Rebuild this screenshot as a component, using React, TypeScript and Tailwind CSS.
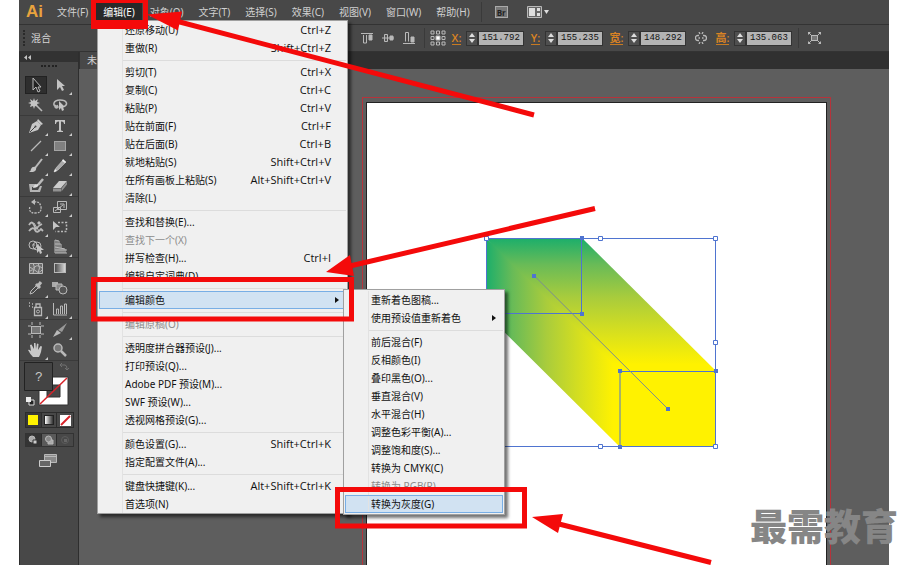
import { Fragment, type ReactNode } from 'react';

type MenuEntry = { label: string; keys?: string; disabled?: boolean; active?: boolean; submenu?: boolean };

const menuBar = ['文件(F)', '编辑(E)', '对象(O)', '文字(T)', '选择(S)', '效果(C)', '视图(V)', '窗口(W)', '帮助(H)'];

const editMenu: MenuEntry[][] = [
  [{ label: '还原移动(U)', keys: 'Ctrl+Z' }, { label: '重做(R)', keys: 'Shift+Ctrl+Z' }],
  [
    { label: '剪切(T)', keys: 'Ctrl+X' },
    { label: '复制(C)', keys: 'Ctrl+C' },
    { label: '粘贴(P)', keys: 'Ctrl+V' },
    { label: '贴在前面(F)', keys: 'Ctrl+F' },
    { label: '贴在后面(B)', keys: 'Ctrl+B' },
    { label: '就地粘贴(S)', keys: 'Shift+Ctrl+V' },
    { label: '在所有画板上粘贴(S)', keys: 'Alt+Shift+Ctrl+V' },
    { label: '清除(L)' },
  ],
  [
    { label: '查找和替换(E)...' },
    { label: '查找下一个(X)', disabled: true },
    { label: '拼写检查(H)...', keys: 'Ctrl+I' },
    { label: '编辑自定词典(D)...' },
  ],
  [{ label: '编辑颜色', active: true, submenu: true }],
  [{ label: '编辑原稿(O)', disabled: true }],
  [
    { label: '透明度拼合器预设(J)...' },
    { label: '打印预设(Q)...' },
    { label: 'Adobe PDF 预设(M)...' },
    { label: 'SWF 预设(W)...' },
    { label: '透视网格预设(G)...' },
  ],
  [{ label: '颜色设置(G)...', keys: 'Shift+Ctrl+K' }, { label: '指定配置文件(A)...' }],
  [{ label: '键盘快捷键(K)...', keys: 'Alt+Shift+Ctrl+K' }, { label: '首选项(N)' }],
];

const colorMenu: MenuEntry[][] = [
  [{ label: '重新着色图稿...' }, { label: '使用预设值重新着色', submenu: true }],
  [
    { label: '前后混合(F)' },
    { label: '反相颜色(I)' },
    { label: '叠印黑色(O)...' },
    { label: '垂直混合(V)' },
    { label: '水平混合(H)' },
    { label: '调整色彩平衡(A)...' },
    { label: '调整饱和度(S)...' },
    { label: '转换为 CMYK(C)' },
    { label: '转换为 RGB(R)', disabled: true },
    { label: '转换为灰度(G)', active: true },
  ],
];

function MenuList({ groups, className }: { groups: MenuEntry[][]; className: string }) {
  return (
    <div role="menu" className={`absolute border border-[#a0a0a0] bg-[#f0f0f0] px-px font-['Noto_Sans','Noto_Sans_CJK_SC',sans-serif] text-[10px] text-[#111] shadow-[3px_3px_3px_rgba(0,0,0,0.55)] ${className}`}>
      {groups.map((group, i) => (
        <Fragment key={i}>
          {i > 0 && (
            <div className="flex h-[6px] items-center">
              <span className="h-full w-6 border-r border-[#e2e2e2]" />
              <span className="h-px flex-1 bg-[#dcdcdc]" />
            </div>
          )}
          {group.map((item) => (
            <button
              key={item.label}
              role="menuitem"
              disabled={item.disabled}
              className={`flex h-[18px] w-full items-center whitespace-nowrap ${item.active ? 'bg-[#d1e2f2] outline -outline-offset-1 outline-[#78aee5]' : ''} ${item.disabled ? 'text-[#8c8c8c]' : ''}`}
            >
              <span className="mr-[2px] h-full w-6 shrink-0 border-r border-[#e2e2e2]" />
              {item.label}
              {item.keys && <span className="ml-auto pr-[15px] font-['Open_Sans',sans-serif] text-[11px]">{item.keys}</span>}
              {item.submenu && (
                <svg className="mr-[7px] ml-auto" width="4" height="6" viewBox="0 0 4 6"><path d="M0 0l4 3-4 3z" fill="#111" /></svg>
              )}
            </button>
          ))}
        </Fragment>
      ))}
    </div>
  );
}

function Icon({ children, w = 16, h = 16 }: { children: ReactNode; w?: number; h?: number }) {
  return <svg width={w} height={h} viewBox={`0 0 ${w} ${h}`} fill="none" stroke="#b9b9b9" className="shrink-0">{children}</svg>;
}

type Tool = { name: string; art: ReactNode; more?: boolean; active?: boolean };

const toolGroups: Tool[][] = [
  [
    { name: '选择', active: true, art: <path d="M5 1v12l3-3 2 5 2-1-2-4h3z" fill="#222" /> },
    { name: '直接选择', more: true, art: <path d="M5 2v11l3-3 2 4 2-1-2-4h3z" fill="#c4c4c4" stroke="none" /> },
    { name: '魔棒', art: <><path d="M6 1l1 3 3-2-1 3 3 1-3 1 1 3-3-1-1 3-1-3-3 1 1-3-3-1 3-1-1-3 3 2z" fill="#c4c4c4" stroke="none" /><path d="M9 9l5 5" strokeWidth="1.6" /></> },
    { name: '套索', art: <><path d="M5 10C0 9 1 3 8 3s9 5 3 7M4 8c-2 2 0 4 2 2l-1-2" strokeWidth="1.6" /><path d="M7 4v9l2-2 1 3 2-1-1-3h2z" fill="#c4c4c4" stroke="none" /></> },
  ],
  [
    { name: '钢笔', more: true, art: <><path d="M1 15l3-9 5-3 4 4-3 5z" fill="#c8c8c8" stroke="none" /><path d="M10 1l5 5-2 1-4-4z" fill="#c8c8c8" stroke="none" /><path d="M2 14l5-5" stroke="#444" /><circle cx="7.500" cy="8.500" r="1" fill="#444" stroke="none" /></> },
    { name: '文字', more: true, art: <path d="M3 2h10v4h-1q0-2.500-2.500-2.500H9V12q0 1 2 1v1H5v-1q2 0 2-1V3.500H6.500Q4 3.500 4 6H3z" fill="#c4c4c4" stroke="none" /> },
    { name: '直线段', more: true, art: <path d="M3 13L13 3" strokeWidth="1.300" /> },
    { name: '矩形', more: true, art: <rect x="2.500" y="3.500" width="11" height="9" fill="#808080" stroke="#a5a5a5" /> },
    { name: '画笔', more: true, art: <><path d="M14 1L7 10" strokeWidth="2" /><path d="M8 9q1 4-3 5H1q2-1 2-3 1-3 5-2z" fill="#c4c4c4" stroke="none" /></> },
    { name: '铅笔', more: true, art: <><path d="M2 14l2-4 7-8 3 2-8 8z" fill="#aaa" stroke="#ccc" strokeWidth=".6" /><path d="M2 14l1-3 2 2zM10 3l1-2 3 3-1 1z" fill="#eee" stroke="none" /></> },
    { name: '斑点画笔', art: <><path d="M1 6h7v3H4v3h6l2-4h2l-2 6H2z" fill="#b4b4b4" stroke="none" /><path d="M15 1l-5 6" strokeWidth="2.500" /><path d="M5 10q1-4 5-4 2 3-5 4z" fill="#ddd" stroke="none" /></> },
    { name: '橡皮擦', more: true, art: <><path d="M1 10l6-7h8l-6 7z" fill="#ccc" stroke="none" /><path d="M1 10.500v3h8v-3zM9.500 10.500l5.500-7v3l-5.500 7z" fill="#919191" stroke="none" /></> },
  ],
  [
    { name: '旋转', more: true, art: <><path d="M6 3q6-1 7 5t-6 6-5-7" strokeDasharray="2 1" strokeWidth="1.300" /><path d="M7 0L3 3l4 3z" fill="#bbb" stroke="none" /></> },
    { name: '比例缩放', more: true, art: <><path d="M5.500 2.500h9v8h-9zM1.500 8.500h7v5h-7z" /><path d="M3 12l8-6M8 5h4v4" /></> },
    { name: '宽度', more: true, art: <><path d="M1 6q3-5 5 0t3 3 5-4M1 12q4-5 6-1t6-1l2 2" strokeWidth="1.800" /><path d="M6 4l5 8" strokeWidth="1" /><circle cx="11" cy="4" r="1.200" fill="#ccc" /></> },
    { name: '自由变换', art: <><path d="M1 2v9l3-3h4z" fill="#c4c4c4" stroke="none" /><path d="M6 3.500h8.500v9h-11" strokeDasharray="2 1.500" strokeWidth="1.500" /></> },
    { name: '形状生成器', more: true, art: <><circle cx="5" cy="6" r="4" /><circle cx="9" cy="7" r="4" /><path d="M4 6h8" strokeDasharray="1 1" /><path d="M9 5v9l2-2 1 3 2-1-1-3h3z" fill="#c4c4c4" stroke="none" /></> },
    { name: '透视网格', more: true, art: <path d="M3 1v13h12M3 1l4 1v12M3 5h6v9M3 8l10 2v4M3 11h12M5 2v12M11 9v5" /> },
  ],
  [
    { name: '网格', art: <><path d="M1.500 3.500h13v10h-13z" fill="#6a6a6a" /><path d="M1 7q4 3 6 0t7 1M1 12q4-4 7-1t6-1M5 3q3 4 0 10M10 3q3 5 0 10" /></> },
    { name: '渐变', art: <><defs><linearGradient id="tool-fade"><stop stopColor="#444" /><stop offset="1" stopColor="#ddd" /></linearGradient></defs><rect x="2.500" y="3.500" width="11" height="9" fill="url(#tool-fade)" /></> },
    { name: '吸管', more: true, art: <><path d="M2 14l1-3 6-6 2 2-6 6z" /><path d="M8 4l4 4M10 6l3-4" strokeWidth="3" /></> },
    { name: '混合', art: <><path d="M0 2h6v5H0z" fill="#aaa" stroke="none" /><path d="M4 4h6v6H4z" fill="#888" /><circle cx="11" cy="10" r="4" fill="#555" /></> },
  ],
  [
    { name: '符号喷枪', more: true, art: <><path d="M6.500 6.500h7v8h-7zM8 6V3h4v3" strokeWidth="1.300" /><circle cx="10" cy="10.500" r="1.500" /><path d="M1 2h1M4 3h1M1 5h1M4 6h1" strokeWidth="1.300" /></> },
    { name: '柱形图', more: true, art: <path d="M1.500 2v12H15M4.500 13V8h2v5M8.500 13V5h2v8M12.500 13V3h2v10" /> },
  ],
  [
    { name: '画板', art: <><path d="M4 0v16M12 0v16M0 4h16M0 12h16" strokeDasharray="3 10" /><rect x="3.500" y="4.500" width="9" height="7" fill="#777" /></> },
    { name: '切片', more: true, art: <><path d="M1 15l4-7 4 3z" fill="#bbb" stroke="none" /><path d="M6 8l9-7-5 9z" fill="#999" stroke="none" /></> },
    { name: '抓手', more: true, art: <path d="M5 15Q2 12 0 8q1-1 3 1L2 3l1.500-.5L6 7V1h1.500L8 7l1-5.500 1.500.5L10 8l2.500-4 1.500.5L13 10q-1 3-2 5z" fill="#c8c8c8" stroke="none" /> },
    { name: '缩放', art: <><circle cx="6" cy="6" r="4" strokeWidth="1.500" fill="#777" /><path d="M9 9l5 5" strokeWidth="2.500" /></> },
  ],
];

function ToolBox() {
  return (
    <aside className="flex w-[60px] shrink-0 flex-col border-x border-[#2e2e2e] bg-[#484848]">
      <div className="flex h-[10px] items-center bg-[#323232] pl-1">
        <svg width="7" height="5" viewBox="0 0 7 5"><path d="M3 0v5L0 2.500zM7 0v5L4 2.500z" fill="#c4c4c4" /></svg>
      </div>
      <div className="flex h-[13px] justify-center pt-[3px]"><span className="h-[3px] w-4 border-t-2 border-dotted border-[#222]" /></div>
      {toolGroups.map((group, i) => (
        <div key={i} className={`grid grid-cols-2 pr-[6px] pl-1 ${i ? 'border-t border-[#3a3a3a]' : ''}`}>
          {group.map((tool) => (
            <button key={tool.name} aria-label={tool.name} className="relative flex h-5 items-center justify-center">
              <span className={tool.active ? 'border border-[#222] bg-[#2e2e2e] px-[2px]' : ''}><Icon>{tool.art}</Icon></span>
              {tool.more && <svg className="absolute right-0 bottom-0" width="3" height="3" viewBox="0 0 3 3"><path d="M3 0v3H0z" fill="#ccc" /></svg>}
            </button>
          ))}
        </div>
      ))}
      <div className="border-t border-[#3a3a3a] pl-1">
        <svg width="46" height="47" viewBox="0 0 46 47" aria-label="填色和描边">
          <path d="M15 16h29v28H15z" fill="#fff" stroke="#333" />
          <path d="M23 24h13v12H23z" fill="#484848" stroke="#333" />
          <path d="M16 43l27-26" stroke="#d8232a" strokeWidth="1.500" />
          <path d="M.5 1.500h28v28H.5z" fill="#444" stroke="#222" />
          <text x="11" y="20" fontSize="13" fill="#c8c8c8" fontFamily="Liberation Mono">?</text>
          <path d="M37 4h4q2 0 2 4M38 2l-2 2 2 2M41 7l2 2 2-2" fill="none" stroke="#707070" />
          <path d="M5 39h5v5H5z" fill="#222" stroke="#ddd" /><path d="M2 36h5v5H2z" fill="#eee" />
        </svg>
      </div>
      <div className="mt-[4px] ml-[5px] grid h-4 w-[49px] grid-cols-3 divide-x divide-[#2c2c2c] border border-[#2c2c2c]">
        <button aria-label="颜色" className="flex items-center justify-center bg-[#383838]"><span className="size-[10px] bg-[#fff200]" /></button>
        <button aria-label="渐变填充" className="flex items-center justify-center"><span className="size-[10px] border border-[#222] bg-linear-to-r from-white to-[#333]" /></button>
        <button aria-label="无" className="flex items-center justify-center"><svg width="11" height="11" viewBox="0 0 11 11"><path d="M0 0h11v11H0z" fill="#fff" /><path d="M1 10l9-9" stroke="#d8232a" strokeWidth="2" /></svg></button>
      </div>
      <div className="mt-[5px] ml-[5px] grid h-[14px] w-[49px] grid-cols-3 divide-x divide-[#2c2c2c] border border-[#333]">
        <button aria-label="正常绘图" className="flex items-center justify-center bg-[#343434]"><Icon w={10} h={10}><circle cx="4" cy="4" r="3" fill="#aaa" /><path d="M5 5h4v4H5z" fill="#ccc" stroke="#333" /></Icon></button>
        <button aria-label="背面绘图" className="flex items-center justify-center bg-[#5a5a5a]"><Icon w={10} h={10}><path d="M4 5h5v4H4z" fill="#aaa" /><circle cx="4.500" cy="4" r="3" fill="#888" /></Icon></button>
        <button aria-label="内部绘图" className="flex items-center justify-center"><svg width="10" height="10" viewBox="0 0 10 10"><circle cx="5" cy="5" r="3.500" fill="none" stroke="#5c5c5c" /><path d="M4 4h3v3H4z" fill="#666" /></svg></button>
      </div>
      <button aria-label="屏幕模式" className="mt-[6px] ml-[18px] w-5">
        <Icon w={19} h={15}><path d="M6.500 1.500h12v8h-12z" fill="#8a8a8a" /><path d="M7 3.500h11" /><path d="M1.500 7.500h11v6h-11z" fill="#666" stroke="#ccc" /></Icon>
      </button>
    </aside>
  );
}

function Measure({ label, name, value, wide }: { label: string; name: string; value: string; wide?: boolean }) {
  return (
    <div className="flex items-center">
      <label htmlFor={name} className={`flex justify-center border-b border-[#c77a22] text-[11px] leading-[13px] font-semibold text-[#d98324] ${wide ? 'w-[13px]' : 'w-[9px]'}`}>{label}</label>
      <div className="ml-[5px] flex h-[15px] w-[12px] items-center justify-center border border-[#333] bg-[#4f4f4f]">
        <svg width="6" height="10" viewBox="0 0 6 10"><path d="M0 4l3-4 3 4zM0 6l3 4 3-4z" fill="#ddd" /></svg>
      </div>
      <input id={name} defaultValue={value} className="h-[15px] w-[46px] border border-[#333] bg-[#b4b4b4] pl-[3px] font-['Liberation_Mono',monospace] text-[9px] text-[#111]" />
    </div>
  );
}

function OptionsBar() {
  return (
    <div className="flex h-7 items-center border-y border-[#333] bg-[#484848]">
      <div className="flex w-[342px] shrink-0 items-center gap-[5px] pl-1">
        <span className="h-4 w-[3px] border-l-2 border-dotted border-[#2a2a2a]" />
        <span className="text-[10px] text-[#d6d6d6]">混合</span>
      </div>
      <div className="flex gap-[9px]">
        <button aria-label="垂直顶对齐"><Icon w={12} h={14}><path d="M0 2.500h12M2.500 4v8h3V4" /><path d="M8 4h3v5H8z" fill="#b9b9b9" /></Icon></button>
        <button aria-label="垂直居中对齐"><Icon w={12} h={14}><path d="M0 7h12M2.500 3.500h3v7h-3z" fill="#555" /><path d="M8 5h3v4H8z" fill="#b9b9b9" /></Icon></button>
        <button aria-label="垂直底对齐"><Icon w={12} h={14}><path d="M0 12.500h12M2.500 10.500v-9h3v9" /><path d="M8 6h3v5H8z" fill="#b9b9b9" /></Icon></button>
      </div>
      <span className="ml-[9px] h-5 w-px bg-[#3a3a3a]" />
      <button aria-label="参考点" className="ml-[5px]">
        <Icon w={16} h={16}><path d="M1 1h3v3H1zM6.500 1h3v3h-3zM12 1h3v3h-3zM1 6.500h3v3H1zM12 6.500h3v3h-3zM1 12h3v3H1zM6.500 12h3v3h-3zM12 12h3v3h-3z" /><path d="M6 6h4v4H6z" fill="#fff" /></Icon>
      </button>
      <div className="ml-[6px] flex items-center gap-[7px]">
        <Measure label="X:" name="pos-x" value="151.792 mm" />
        <Measure label="Y:" name="pos-y" value="155.235 mm" />
        <Measure label="宽:" name="size-w" value="148.292 mm" wide />
      </div>
      <button aria-label="约束比例" className="mx-[9px]"><Icon w={12} h={12}><path d="M4 3.500H3Q.5 3.500.5 6T3 8.500h1M8 3.500h1q2.500 0 2.500 2.500T9 8.500H8M4 0l1 2M8 0L7 2M4 12l1-2M8 12l-1-2M3.500 6h1.500M7 6h1.500" strokeWidth="1.300" /></Icon></button>
      <Measure label="高:" name="size-h" value="135.063 mm" wide />
      <span className="ml-[6px] h-5 w-px bg-[#3a3a3a]" />
      <button aria-label="变换" className="ml-[9px]"><Icon w={13} h={12}><path d="M3.500 3.500h6v5h-6z" fill="#777" /><path d="M1 1l3 3M12 1L9 4M1 11l3-3M12 11L9 8" /><path d="M0 0h3L0 3zM13 0h-3l3 3zM0 12h3L0 9zM13 12h-3l3-3z" fill="#b9b9b9" stroke="none" /></Icon></button>
    </div>
  );
}

function BlendArt() {
  return (
    <svg width="238" height="217" viewBox="482 234 238 217" aria-label="混合对象">
      <defs>
        <linearGradient id="blend-top" x1="0" y1="238" x2="0" y2="371" gradientUnits="userSpaceOnUse">
          <stop stopColor="#1bae6b" /><stop offset=".2" stopColor="#69bb57" /><stop offset=".45" stopColor="#a9cc3c" /><stop offset=".7" stopColor="#d6df1f" /><stop offset=".95" stopColor="#fff200" />
        </linearGradient>
        <linearGradient id="blend-side" x1="486" y1="0" x2="620" y2="0" gradientUnits="userSpaceOnUse">
          <stop stopColor="#1bae6b" /><stop offset=".2" stopColor="#69bb57" /><stop offset=".45" stopColor="#a9cc3c" /><stop offset=".7" stopColor="#d6df1f" /><stop offset=".95" stopColor="#fff200" />
        </linearGradient>
      </defs>
      <path d="M486 238v76l134 133v-76l20 0z" fill="url(#blend-side)" />
      <path d="M486 238h96l134 133h-96z" fill="url(#blend-top)" />
      <path d="M620 371h96v76h-96z" fill="#fff200" />
      <g fill="none" stroke="#4f74d0">
        <path d="M486.500 238.500h229v208h-229zM486.500 238.500h95v75h-95zM620 371.500h95.500v75H620z" />
        <path d="M534 275.500L668 409" stroke="#7a8c94" />
      </g>
      <path d="M580 236h4v4h-4zM580 312h4v4h-4zM532 274h4v4h-4zM666 407h4v4h-4zM618 369h4v4h-4zM714 369h4v4h-4zM618 445h4v4h-4z" fill="#4f74d0" />
      <path d="M484.500 236.500h4v4h-4zM598.500 236.500h4v4h-4zM713.500 236.500h4v4h-4zM713.500 340.500h4v4h-4zM598.500 444.500h4v4h-4zM713.500 444.500h4v4h-4z" fill="#fff" stroke="#4f74d0" />
    </svg>
  );
}

function Annotations() {
  return (
    <svg className="pointer-events-none absolute top-0 left-0" width="904" height="565" viewBox="0 0 904 565">
      <path d="M91 0h57v29H91zM96 3v17h47V3z" fill="#f40a0a" fillRule="evenodd" />
      <g fill="none" stroke="#f40a0a" strokeWidth="5">
        <path d="M93.500 279.500h258v39.500h-258z" />
        <path d="M337.500 489.500h187v36.500h-187z" />
        <path d="M176 21L534 115M350 266L595 208.500M555 523L711 562.500" />
      </g>
      <path d="M147 14.500l35-3-4 19zM326 272l24-17 4 21zM532 517l31-3-5 19z" fill="#f40a0a" />
    </svg>
  );
}

export default function App() {
  return (
    <div className="relative flex min-h-screen flex-col overflow-hidden bg-white pr-[15px] pl-[19px] font-['Open_Sans','Noto_Sans_CJK_SC',sans-serif]">
      <header className="flex h-6 items-center bg-[#484848] text-[10px] text-[#d0d0d0]">
        <span className="ml-[7px] w-[24px] font-['Liberation_Sans',sans-serif] text-[17px] leading-5 font-bold text-[#e8a33d]">Ai</span>
        <nav className="flex gap-px font-['Noto_Sans','Noto_Sans_CJK_SC',sans-serif]">
          {menuBar.map((name) => (
            <button key={name} className={`h-5 px-[7px] ${name === '编辑(E)' ? 'bg-[#292929] text-white' : ''}`}>{name}</button>
          ))}
        </nav>
        <span className="ml-1 h-5 w-px bg-[#3a3a3a]" />
        <button aria-label="Bridge" className="ml-[13px] h-3 w-[13px] border border-[#aaa] bg-[#777] text-[8px] leading-[9px] font-bold text-[#222]">Br</button>
        <button aria-label="排列文档" className="ml-[19px]">
          <Icon w={22} h={12}><path d="M.5.5h14v11H.5z" fill="#666" /><path d="M2 2h6v8H2zM10 2h3v3h-3zM10 7h3v3h-3z" fill="#ddd" stroke="none" /><path d="M17 4h5l-2.500 4z" fill="#ddd" stroke="none" /></Icon>
        </button>
      </header>
      <OptionsBar />
      <main className="flex flex-1">
        <ToolBox />
        <section className="flex min-w-0 flex-1 flex-col bg-[#5e5e5e]">
          <div className="flex h-[17px] bg-[#303030] pl-px"><span className="w-24 bg-[#484848] pl-[7px] text-[10px] leading-[17px] text-[#d0d0d0]">未</span></div>
          <div className="mt-7 mr-[58px] ml-[283px] flex flex-1 border border-b-0 border-[#b5333b] px-[3px] pt-1">
            <div className="flex-1 border border-b-0 border-[#222] bg-white pt-[131px] pl-[115px]"><BlendArt /></div>
          </div>
        </section>
      </main>

      <MenuList groups={editMenu} className="top-5 left-[97px] w-[251px]" />
      <MenuList groups={colorMenu} className="top-[289px] left-[343px] w-[162px] py-px" />
      <Annotations />
      <div className="absolute right-[6px] bottom-[17px] font-['Noto_Sans_CJK_SC',sans-serif] text-[37px] leading-[46px] font-black text-[#868686]">最需教育</div>
    </div>
  );
}
